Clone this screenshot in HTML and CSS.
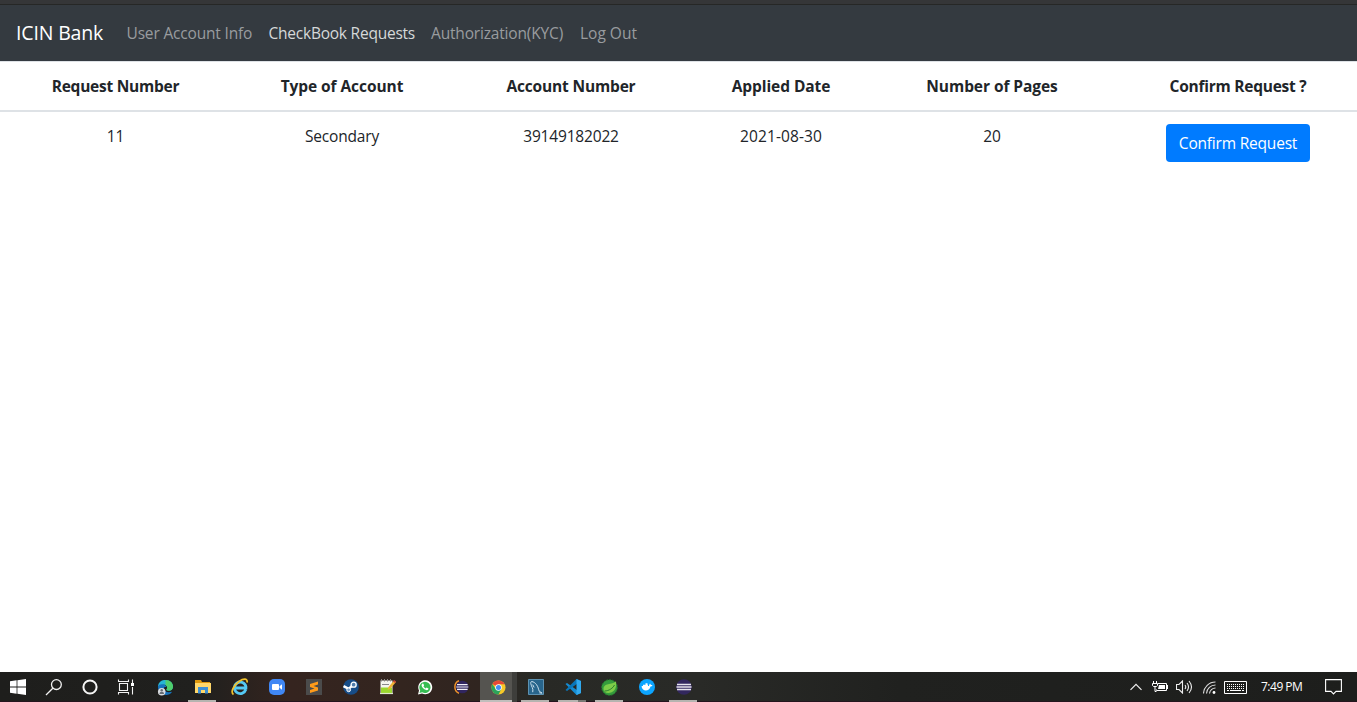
FILE: index.html
```html
<!DOCTYPE html>
<html lang="en">
<head>
<meta charset="utf-8">
<title>ICIN Bank</title>
<link rel="stylesheet" href="styles.css">
</head>
<body>
<div class="screen">
  <div class="window-edge"></div>
  <nav class="navbar">
    <a class="brand">ICIN Bank</a>
    <a class="link l1">User Account Info</a>
    <a class="link l2 active">CheckBook Requests</a>
    <a class="link l3">Authorization(KYC)</a>
    <a class="link l4">Log Out</a>
  </nav>
  <main class="content">
    <table class="requests">
      <colgroup><col class="c1"><col class="c2"><col class="c3"><col class="c4"><col class="c5"><col class="c6"></colgroup>
      <thead>
        <tr><th class="tight">Request Number</th><th class="wide">Type of Account</th><th>Account Number</th><th class="wide">Applied Date</th><th class="wide">Number of Pages</th><th class="tight">Confirm Request ?</th></tr>
      </thead>
      <tbody>
        <tr><td>11</td><td>Secondary</td><td>39149182022</td><td class="date">2021-08-30</td><td>20</td><td><button class="btn">Confirm Request</button></td></tr>
      </tbody>
    </table>
  </main>
  <footer class="taskbar">
    <div class="system">
      <span class="cell"><svg width="16" height="16" viewBox="0 0 16 16" fill="#fff"><path d="M0 2.2 6.6 1.3V7.5H0zM7.4 1.2 16 0V7.5H7.4zM0 8.4H6.6V14.7L0 13.8zM7.4 8.4H16V16L7.4 14.8z"/></svg></span>
      <span class="cell"><svg width="18" height="18" viewBox="0 0 18 18" fill="none" stroke="#f2f2f2" stroke-width="1.3"><circle cx="11.4" cy="6.6" r="4.9"/><path d="M7.8 10.2 1 17"/></svg></span>
      <span class="cell"><svg width="16" height="16" viewBox="0 0 16 16" fill="none" stroke="#f5f5f5" stroke-width="2"><circle cx="8" cy="8" r="6.6"/></svg></span>
      <span class="cell"><svg width="18" height="16" viewBox="0 0 18 16" fill="none" stroke="#f2f2f2" stroke-width="1.1"><path d="M2.5 4.5h8v7h-8zM1.5 .5v2h10v-2M1.5 15.5v-2h10v2M15.5 .5v3.5M15.5 8v7.5"/><path d="M14 4h3v3h-3z" fill="#fff" stroke="none"/></svg></span>
    </div>
    <div class="apps">
      <span class="cell"><svg width="17" height="17" viewBox="0 0 18 18"><path d="M1 8C1.5 3 5 1 9 1c5 0 8 3.5 8 7 0 3-2 4.5-4.5 4.5-2 0-3-.8-2.2-1.8C12 8 9.5 6 7 6 4 6 2 7 1 8z" fill="#27b5d3"/><path d="M9 1c5 0 8 3.500 8 7 0 3-2 4.500-4.500 4.500-2 0-3-.8-2.200-1.800C11.500 9 10.500 7 9 6.300z" fill="#4fce6c"/><path d="M1 8c1.500-3.500 8-3 9 .5-2-.5-3 .5-2.500 2 1 3.500 4 4 8.500 3C12 20 1 17 1 8z" fill="#1673bd"/><circle cx="5" cy="13.500" r="4" fill="#d9dce0"/><circle cx="5" cy="12" r="1.300" fill="#666d74"/><path d="M2.500 16q0-2.500 2.500-2.500t2.500 2.500z" fill="#666d74"/></svg></span>
      <span class="cell open"><svg width="17" height="16" viewBox="0 0 17 16"><path d="M1 1h6l1 2h8v4H1z" fill="#dd970d"/><path d="M1 4h16v10H1z" fill="#ffd76a"/><path d="M4 14.500V8h10v6.500h-3V11H7v3.500H4z" fill="#3d8fd5"/></svg></span>
      <span class="cell"><svg width="18" height="18" viewBox="0 0 18 18" fill="none"><path d="M14.800 11.500A5.800 5.800 0 1 1 14.900 8.500V10H4" stroke="#55c9f4" stroke-width="2.800"/><path d="M2.500 16.500C-1 14 3 7 8 3.500S16.800.5 16 4.500" stroke="#f3c22b" stroke-width="1.700"/></svg></span>
      <span class="cell"><svg width="16" height="16" viewBox="0 0 16 16"><rect width="16" height="16" rx="5" fill="#4087f4"/><rect x="3" y="5" width="7" height="6" rx="1" fill="#fff"/><path d="m10.500 7.300 2.500-2v5.400l-2.500-2z" fill="#fff"/></svg></span>
      <span class="cell"><svg width="16" height="16" viewBox="0 0 16 16"><path d="M0 0h16v16H0z" fill="#4b4b4b"/><path d="M12 2.500v3L7.500 7 12 8.500v3L4 14v-3l4.500-1.500L4 8V5z" fill="#ff9b1a"/></svg></span>
      <span class="cell"><svg width="16" height="16" viewBox="0 0 17 17"><circle cx="8.500" cy="8.500" r="8.300" fill="#174d88"/><path d="m.6 7.500 5.400 3 4.500-4" stroke="#fff" stroke-width="2.600" fill="none"/><circle cx="6" cy="11.500" r="2" fill="#7ea2c9" stroke="#fff"/><circle cx="11.300" cy="6" r="2.700" fill="#4f7dad" stroke="#fff" stroke-width="1.400"/></svg></span>
      <span class="cell"><svg width="17" height="18" viewBox="0 0 17 18"><path d="M1.500 2.500h12v13h-12z" fill="#f5f5ef"/><path d="M2 9.500h11V15H2z" fill="#9bd72e"/><path d="M1 15.500h13" stroke="#dfe9cc" stroke-width="1.200"/><path d="M2.500 1v2.500M5.500 1v2.500M8.500 1v2.500M11.500 1v2.500M3 6.500h7" stroke="#888"/><path d="m8.500 12 1-3L15 2.500 17 4l-5.500 6.500z" fill="#efb336"/><path d="m14 3.500 1-1.500 2 1.500-1 1.500z" fill="#c64037"/></svg></span>
      <span class="cell"><svg width="16" height="16" viewBox="0 0 16 16"><path d="M1 15.500 2 11.500A7 7 0 1 1 5 14.500z" fill="#fff"/><path d="m2.500 14 .7-2.600A5.600 5.600 0 1 1 5.200 13.300z" fill="#36bd52"/><path d="M5.300 4.800q1-.8 1.400.7l.4 1-.7.8q.7 1.500 2.300 2.200l.8-1 2 .9q-.1 2.100-2.300 1.700C6.600 10.400 4.500 8 4.500 6z" fill="#fff"/></svg></span>
      <span class="cell"><svg width="15" height="14" viewBox="0 0 15 14"><path d="M5 .8C-.500 3-.500 11 5 13.200" fill="none" stroke="#ed922b" stroke-width="1.500"/><circle cx="8.300" cy="7" r="6.300" fill="#312660"/><path d="M3 4.700h10.600M2.300 7h12M3 9.300h10.600" stroke="#f3f1fa" stroke-width="1.200"/></svg></span>
      <span class="cell chrome"><svg width="15" height="15" viewBox="0 0 16 16"><circle cx="8" cy="8" r="7.500" fill="#f7c827"/><path d="M8 8 1.500 4.200A7.500 7.500 0 0 1 14.500 4.500H8z" fill="#e64937"/><path d="M1.500 4.200A7.500 7.500 0 0 0 8 15.500L11 9.700 8 8 5 9.500z" fill="#2ba35b"/><circle cx="8" cy="8" r="3.500" fill="#fff"/><circle cx="8" cy="8" r="2.700" fill="#448df4"/></svg></span>
      <span class="cell open"><svg width="16" height="16" viewBox="0 0 17 17"><path d="M.500.500h16v16H.500z" fill="#28658c" stroke="#6299b9"/><path d="M5 14C6 10 3.500 8 3 5c-1-4 4-2 6 1 2 2.500 2 5 3 7l3 2-3-.3M5 6l1.500 3" fill="none" stroke="#d5e8f2"/></svg></span>
      <span class="cell open split"><svg width="16" height="16" viewBox="0 0 16 16"><path d="m.5 5 1.500-1 14 10-4.500 2z" fill="#148bd2"/><path d="m.5 11 1.500 1L16 2l-4.500-2z" fill="#0876ba"/><path d="M11.500 0 16 2v12l-4.500 2z" fill="#31a9ee"/></svg></span>
      <span class="cell open"><svg width="17" height="17" viewBox="0 0 17 17"><circle cx="8.500" cy="8.500" r="7.800" fill="#359b3c" stroke="#267c30" stroke-dasharray="2 1"/><path d="M15 2C13 6 3 3 2.500 10c0 5 8 5 11 1 1.500-2 2-5 1.500-9z" fill="#7dcc48"/><path d="M3.500 12C8 12 12 9 13.500 6" stroke="#2b7d31" fill="none"/></svg></span>
      <span class="cell"><svg width="16" height="16" viewBox="0 0 16 16"><circle cx="8" cy="8" r="8" fill="#0ca5ff"/><path d="M3 7h7q0-1.500 1-2.500l1 1.500h1.500q-.5 1.500-2 1.500C10.500 12.500 3.500 13 2.500 7.500zM4 5.700h5V7H4zM6.500 4.300H8.500v1.500H6.500z" fill="#fff"/></svg></span>
      <span class="cell open"><svg width="16" height="16" viewBox="0 0 16 16"><circle cx="8" cy="8" r="7.800" fill="#32275e"/><path d="M1 5.500h14M.500 8h15M1 10.500h14" stroke="#e6e4ed" stroke-width="1.300"/></svg></span>
    </div>
    <div class="tray">
      <svg class="chev" width="12" height="8" viewBox="0 0 12 8" fill="none" stroke="#eee" stroke-width="1.200"><path d="m.5 6.800 5.500-5.500 5.500 5.500"/></svg>
      <svg class="battery" width="16" height="12" viewBox="0 0 16 12" fill="none" stroke="#fff"><path d="M6 2.500h8.500v7H4.500v-1M15.500 4v4"/><path d="M7 4h6v4H6z" fill="#fff" stroke="none"/><path d="M1.500 0v2.500M4.500 0v2.500M.500 2.500h5v2l-1 1h-3l-1-1zM3 6v4.500h1.500"/></svg>
      <svg class="sound" width="17" height="14" viewBox="0 0 17 14" fill="none" stroke="#eee" stroke-width="1.100"><path d="M.500 4.500h2.500L6.500 1v12L3 9.500H.500zM9 5q1.500 2 0 4M11 3q3 4 0 8M13 1q5 6 0 12"/></svg>
      <svg class="wifi" width="13" height="13" viewBox="0 0 13 13" fill="none" stroke="#ddd" stroke-width="1.100"><path d="M.500 12.500A12 12 0 0 1 12.500 1M3.500 12.500A9 9 0 0 1 12.500 4M6.500 12.500A6 6 0 0 1 12.500 7"/><circle cx="11" cy="11.500" r="1.400" fill="#fff" stroke="none"/></svg>
      <svg class="keyboard" width="23" height="13" viewBox="0 0 23 13" fill="none" stroke="#fff"><path d="M.500.500h22v12H.500z"/><path d="M3 3.500h18M3 5.500h18M3 7.500h18" stroke-dasharray="1 1"/><path d="M3 9.500h2M6 9.500h11M18 9.500h2"/></svg>
      <span class="clock">7:49 PM</span>
      <svg class="notice" width="17" height="16" viewBox="0 0 17 16" fill="none" stroke="#fff" stroke-width="1.100"><path d="M.600.600h15.800v11.800H11l-2.500 2.500L6 12.400H.600z"/></svg>
    </div>
  </footer>
</div>
</body>
</html>
```
FILE: styles.css
```css
* { box-sizing: border-box; }
body { margin: 0; background: #fff; color: #212529; font: 15.500px/24px "Open Sans", "Noto Sans", sans-serif; letter-spacing: -.17px; }
.screen { width: 1357px; height: 702px; display: flex; flex-direction: column; overflow: hidden; }
.window-edge { height: 5px; flex: none; background: #353638; border-bottom: 1px solid #262726; }
.navbar { height: 56px; flex: none; display: flex; align-items: center; padding: 0 16px; background: #343a40; white-space: nowrap; }
.brand { width: 110.500px; color: #fff; font-size: 19.500px; letter-spacing: -.15px; line-height: 30px; }
.link { color: #999c9f; }
.link.active { color: #d6d8d9; letter-spacing: -.23px; }
.l1 { width: 142px; }
.l2 { width: 162.500px; }
.l3 { width: 149px; }
.l4 { letter-spacing: 0; }
.content { flex: 1; min-height: 0; overflow: hidden; }
.requests { width: 1365px; table-layout: fixed; border-collapse: separate; border-spacing: 0; text-align: center; white-space: nowrap; }
.c1 { width: 231px; }
.c2 { width: 222px; }
.c3 { width: 236px; }
.c4 { width: 184px; }
.c5 { width: 238px; }
.c6 { width: 254px; }
th { height: 51px; padding: 12px 0; border-top: 1px solid #dee2e6; border-bottom: 2px solid #dee2e6; font-weight: 700; }
.tight { letter-spacing: -.25px; }
.wide { letter-spacing: -.07px; }
td { padding: 12px 0; vertical-align: top; }
.date { letter-spacing: .1px; }
.btn { display: block; width: 144px; height: 38px; margin: 0 auto; padding: 0; border: 0; border-radius: 4px; background: #007bff; color: #fff; font: inherit; letter-spacing: -.2px; }
.taskbar { height: 30px; flex: none; display: flex; background: linear-gradient(90deg, #1e1e1c 0, #20201e 200px, #35241f 290px, #33251f 400px, #302520 480px, #282925 530px, #292a27 700px, #20211f 900px, #1d1e1c 100%); border-bottom: 1px solid #24151e; }
.taskbar svg { display: block; flex: none; }
.system, .apps, .tray { display: flex; height: 30px; align-items: center; }
.system .cell { width: 36px; }
.system { width: 147px; }
.cell { height: 30px; display: flex; align-items: center; justify-content: center; }
.apps .cell { width: 37px; }
.open { background: linear-gradient(#b5b4b0, #b5b4b0) 4px bottom / 28px 2px no-repeat; }
.split { background: linear-gradient(90deg, #b5b4b0 20px, #777873 20px) 4px bottom / 28px 2px no-repeat; }
.chrome { background: linear-gradient(#c0bebc, #c0bebc) left bottom / 32px 2px no-repeat, linear-gradient(90deg, #555450 32px, #3e3e3b 32px); }
.tray { margin-left: auto; width: 227px; }
.battery { margin-left: 10px; }
.sound { margin-left: 8px; }
.wifi { margin-left: 10px; }
.keyboard { margin-left: 8px; }
.clock { width: 64px; margin-left: 14px; color: #fff; font-size: 12px; line-height: 20px; letter-spacing: -.500px; }
```
